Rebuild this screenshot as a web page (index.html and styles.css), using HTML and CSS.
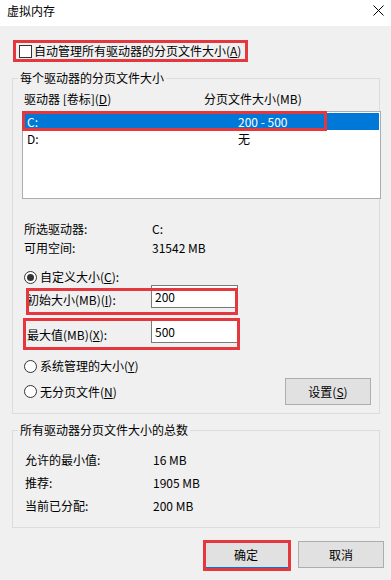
FILE: index.html
```html
<!DOCTYPE html>
<html lang="zh-CN">
<head>
	<meta charset="UTF-8">
	<title>虚拟内存</title>
	<link rel="stylesheet" href="styles.css">
</head>
<body>
	<div class="dialog">
		<div class="titlebar">
			<span class="title">虚拟内存</span>
			<svg class="close" width="11" height="11" viewBox="0 0 11 11">
				<path d="M0.5 0.5L10.5 10.5M10.5 0.5L0.5 10.5" stroke="#000" stroke-width="1" fill="none"/>
			</svg>
		</div>

		<label class="auto-row">
			<span class="checkbox"></span>
			<span>自动管理所有驱动器的分页文件大小(<u>A</u>)</span>
		</label>

		<fieldset class="group group-drives">
			<legend>每个驱动器的分页文件大小</legend>
			<div class="list-head">
				<span class="col-head">驱动器 [卷标](<u>D</u>)</span>
				<span>分页文件大小(MB)</span>
			</div>
			<div class="listbox">
				<div class="list-row selected">
					<span class="col-drive">C:</span>
					<span>200 - 500</span>
				</div>
				<div class="list-row">
					<span class="col-drive">D:</span>
					<span>无</span>
				</div>
			</div>

			<div class="info-row info-first">
				<span class="info-label">所选驱动器:</span>
				<span>C:</span>
			</div>
			<div class="info-row">
				<span class="info-label">可用空间:</span>
				<span>31542 MB</span>
			</div>

			<div class="radio-row radio-custom">
				<span class="radio checked"></span>
				<span>自定义大小(<u>C</u>):</span>
			</div>
			<div class="size-row size-initial">
				<span class="size-label">初始大小(MB)(<u>I</u>):</span>
				<div class="textbox">200</div>
			</div>
			<div class="size-row size-max">
				<span class="size-label">最大值(MB)(<u>X</u>):</span>
				<div class="textbox">500</div>
			</div>
			<div class="radio-row radio-system">
				<span class="radio"></span>
				<span>系统管理的大小(<u>Y</u>)</span>
			</div>
			<div class="radio-row radio-none">
				<span class="radio"></span>
				<span>无分页文件(<u>N</u>)</span>
				<button class="btn btn-set">设置(<u>S</u>)</button>
			</div>
		</fieldset>

		<fieldset class="group group-total">
			<legend>所有驱动器分页文件大小的总数</legend>
			<div class="total-row total-first">
				<span class="info-label">允许的最小值:</span>
				<span>16 MB</span>
			</div>
			<div class="total-row">
				<span class="info-label">推荐:</span>
				<span>1905 MB</span>
			</div>
			<div class="total-row">
				<span class="info-label">当前已分配:</span>
				<span>200 MB</span>
			</div>
		</fieldset>

		<div class="actions">
			<button class="btn btn-ok">确定</button>
			<button class="btn">取消</button>
		</div>
	</div>
</body>
</html>
```

FILE: styles.css
```css
body {
	margin: 0;
	background-color: #F0F0F0;
	font: 12px/16px "Noto Sans CJK SC", "Noto Sans", sans-serif;
	color: #000;
}

.dialog {
	width: 391px;
	height: 580px;
	overflow: hidden;
}

u {
	text-decoration: underline;
	text-underline-offset: 1px;
}

/* 标题栏 */
.titlebar {
	height: 26px;
	box-sizing: border-box;
	padding: 3px 7px 0 7px;
	background-color: #FFF;
	display: flex;
	justify-content: space-between;
	align-items: flex-start;
}

.close {
	margin-top: 2px;
}

/* 自动管理 */
.auto-row {
	width: 235px;
	height: 22px;
	box-sizing: border-box;
	margin: 14px 0 0 13px;
	padding-left: 3px;
	border: 3px solid #E5383E;
	display: flex;
	align-items: center;
	gap: 2px;
}

.checkbox {
	width: 13px;
	height: 13px;
	box-sizing: border-box;
	border: 1px solid #333;
	background-color: #FFF;
}

/* 分组框 */
.group {
	margin: 8px 11px 0 12px;
	padding: 0;
	border: 1px solid #DCDCDC;
	min-width: 0;
}

.group legend {
	margin-left: 5px;
	padding: 0 2px;
	line-height: 16px;
}

.group-drives {
	padding-bottom: 8px;
}

.list-head {
	margin-top: 5px;
	padding-left: 11px;
	display: flex;
}

.col-head {
	width: 180px;
}

.listbox {
	width: 359px;
	height: 88px;
	box-sizing: border-box;
	margin: 4px 0 0 9px;
	padding: 1px;
	border: 1px solid #ABADB3;
	background-color: #FFF;
}

.list-row {
	height: 17px;
	line-height: 17px;
	padding-left: 3px;
	display: flex;
}

.col-drive {
	width: 211px;
}

.list-row.selected {
	background-color: #0078D7;
	color: #FFF;
	position: relative;
}

/* 红框标注 */
.selected:after,
.size-row:after,
.btn-ok:after {
	content: '';
	position: absolute;
	box-sizing: border-box;
	border: 3px solid #E5383E;
}

.selected:after {
	left: -2px;
	top: -2px;
	width: 305px;
	height: 20px;
}

.info-row {
	margin-top: 3px;
	padding-left: 11px;
	display: flex;
}

.info-first {
	margin-top: 22px;
}

.info-label {
	width: 128px;
}

.radio-row {
	padding-left: 11px;
	display: flex;
	align-items: center;
	gap: 3px;
}

.radio-custom {
	margin-top: 13px;
}

.radio-system {
	margin-top: 15px;
}

.radio-none {
	margin-top: 4px;
	height: 27px;
}

.radio {
	width: 13px;
	height: 13px;
	box-sizing: border-box;
	border: 1px solid #333;
	border-radius: 50%;
	background-color: #FFF;
	display: flex;
	align-items: center;
	justify-content: center;
}

.radio.checked:after {
	content: '';
	width: 7px;
	height: 7px;
	border-radius: 50%;
	background-color: #333;
}

.size-row {
	margin-left: 14px;
	display: flex;
	position: relative;
}

.size-max {
	margin-top: 12px;
}

.size-label {
	width: 124px;
	padding-top: 7px;
}

.textbox {
	width: 87px;
	height: 23px;
	box-sizing: border-box;
	padding: 3px;
	border: 1px solid #7A7A7A;
	background-color: #FFF;
}

.size-initial:after {
	left: -1px;
	top: 3px;
	width: 212px;
	height: 27px;
}

.size-max:after {
	left: -4px;
	top: -2px;
	width: 217px;
	height: 32px;
}

/* 按钮 */
.btn {
	width: 86px;
	height: 27px;
	padding: 0;
	border: 1px solid #ADADAD;
	background-color: #E1E1E1;
	font: inherit;
	color: #000;
}

.btn-set {
	margin: 0 8px 0 auto;
}

.btn-ok {
	position: relative;
	border-color: #0078D7;
}

.btn-ok:after {
	left: -1px;
	top: -2px;
	width: 88px;
	height: 31px;
}

/* 总数 */
.group-total {
	padding-bottom: 13px;
}

.total-row {
	margin-top: 7px;
	padding-left: 12px;
	display: flex;
}

.total-first {
	margin-top: 14px;
}

.actions {
	margin-top: 13px;
	padding-right: 7px;
	display: flex;
	justify-content: flex-end;
	gap: 9px;
}
```
